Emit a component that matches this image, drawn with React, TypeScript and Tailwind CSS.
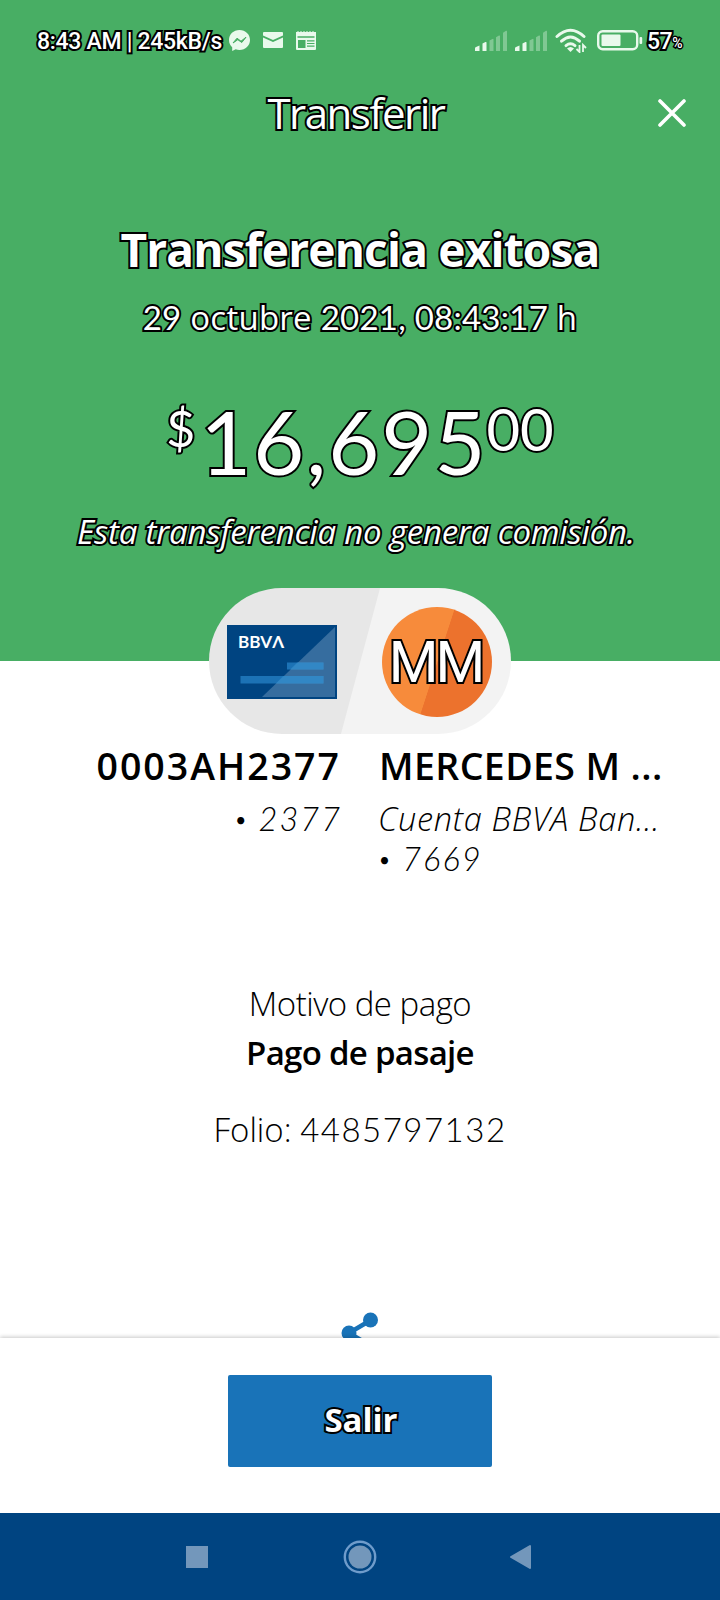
import type { ReactNode } from "react";

const outline = "text-white [paint-order:stroke_fill] [-webkit-text-stroke:4px_#000]";

function Digits({ children, className = "" }: { children: ReactNode; className?: string }) {
  return <span className={`font-['Lato',sans-serif] ${className}`}>{children}</span>;
}

function SignalIcon() {
  return (
    <svg width="32" height="21" viewBox="0 0 32 21" fill="#e9f9ec">
      <path d="M0 21v-2.500q0-1 1-1.400l3.500-1.600V21z" />
      <path d="M7.500 21v-7.500l3-1.500q1-.4 1 .6V21z" />
      <g opacity=".35">
        <path d="M14.500 21V10.500l3-1.600q1-.4 1 .6V21z" />
        <path d="M21 21V7.200l3-1.700q1-.4 1 .6V21z" />
        <path d="M28 21V2.800l3-2q1-.4 1 .6V21z" />
      </g>
    </svg>
  );
}

function StatusBar() {
  return (
    <div className="flex h-20 items-center pl-[37px] text-left font-['Roboto',sans-serif] text-[23px] font-medium">
      <span className={`w-[192px] pt-[4px] tracking-[-0.300px] whitespace-nowrap ${outline}`}>
        8:43 AM | 245kB/s
      </span>
      <svg width="21" height="21" viewBox="0 0 21 21">
        <path
          d="M10.500 0C4.500 0 0 4.300 0 10c0 3 1.200 5.400 3.200 7.200V21l3.500-1.700c1.200.4 2.500.6 3.800.6 6 0 10.500-4.300 10.500-9.900S16.500 0 10.500 0z"
          fill="#e9f9ec"
        />
        <path d="M4 13l4-4.800 4 3 5-4-4.200 5.300-4-2.800z" fill="#48ae64" stroke="#48ae64" strokeWidth="1" />
      </svg>
      <svg className="ml-[13px]" width="20" height="16" viewBox="0 0 20 16" fill="#e9f9ec">
        <path d="M1 0h18q1 0 1 1v2.500l-10 4.500L0 3.500V1q0-1 1-1z" />
        <path d="M0 5.500l10 4.500 10-4.500V15q0 1-1 1H1q-1 0-1-1z" />
      </svg>
      <svg className="ml-[13px]" width="20" height="19" viewBox="0 0 20 19">
        <path
          d="M0 1h1.500V0h1v1h2V0h1v1h2V0h1v1h2V0h1v1h2V0h1v1h2V0h1v1H20v17q0 1-1 1H1q-1 0-1-1z"
          fill="#e9f9ec"
        />
        <path d="M1.500 6h17" stroke="#48ae64" strokeWidth="1.500" />
        <path d="M2 9h7.500v8H2z" fill="#48ae64" />
        <path d="M11 9.800h7.500M11 12.500h7.500M11 15.200h7.500" stroke="#48ae64" strokeWidth="1.200" />
      </svg>
      <div className="ml-auto flex w-[245px] items-center">
        <SignalIcon />
        <span className="w-2" />
        <SignalIcon />
        <svg className="ml-2" width="32" height="25" viewBox="0 0 32 25" fill="none" stroke="#e9f9ec">
          <g strokeWidth="3" strokeLinecap="round">
            <path d="M2 8.500Q15.500-4 29 8.500" />
            <path d="M6.500 13.200Q15.500 4.800 24.500 13.200" />
            <path d="M11 17.600q4.500-3.600 9 0" />
          </g>
          <path d="M12 20.500q3.500-3 7 0L15.500 24z" fill="#e9f9ec" stroke="none" />
          <path d="M24.500 17v7l-3-3M28 24v-7l3 3" strokeWidth="1.800" />
        </svg>
        <svg className="ml-[10px]" width="46" height="21" viewBox="0 0 46 21">
          <rect x="1.200" y="1.200" width="39" height="18" rx="4.500" fill="none" stroke="#e9f9ec" strokeWidth="2.400" />
          <rect x="4.500" y="4.500" width="19" height="11.500" rx="1" fill="#e9f9ec" />
          <rect x="42.500" y="7" width="2.700" height="7" rx="1" fill="#e9f9ec" />
        </svg>
        <span className={`ml-[4px] pt-[4px] tracking-[-0.500px] ${outline}`}>57</span>
        <span className="pt-[7px] text-[14px] text-white [-webkit-text-stroke:3px_#000] [paint-order:stroke_fill]">
          %
        </span>
      </div>
    </div>
  );
}

function Pill() {
  return (
    <div className="relative mx-auto -mt-[73px] flex h-[146px] w-[302px] shrink-0 items-center justify-between rounded-full bg-[linear-gradient(105deg,#e7e7e7_50%,#f3f3f3_50.300%)] pt-px pr-[19px] pl-[18px]">
      <svg width="110" height="74" viewBox="0 0 110 74">
        <rect width="110" height="74" fill="#004481" />
        <path d="M13.500 58.500h83v-7.500h-83zM60 44.500h36.500v-7H60z" fill="#1c72b5" />
        <path d="M35 72L108 2v70z" fill="#8fb0d0" opacity=".38" />
        <path d="M56 51h40.500v7.500H49zM63 44.500h33.500v-7H70z" fill="#2a86c8" opacity=".7" />
        <text
          x="11"
          y="23"
          fill="#fff"
          fontFamily="Lato, sans-serif"
          fontWeight="700"
          fontSize="17"
          textLength="46"
          lengthAdjust="spacingAndGlyphs"
        >
          BBVΛ
        </text>
      </svg>
      <div
        className={`flex size-[110px] items-center justify-center rounded-full bg-[linear-gradient(108deg,#f78b3b_50%,#ec722d_50.500%)] pt-[2px] pr-[3px] font-['Roboto',sans-serif] text-[57px] tracking-[-3px] ${outline}`}
      >
        MM
      </div>
    </div>
  );
}

function AccountNumber({ value }: { value: string }) {
  return (
    <Digits className="tracking-[2px]">
      <span className="align-[4px] text-[19px] leading-none font-normal">•</span> {value}
    </Digits>
  );
}

function Accounts() {
  return (
    <div className="flex gap-[39px] pl-[96px] whitespace-nowrap">
      <div className="w-[244px] text-right">
        <p className="mt-[8px] -mr-px text-[37.500px] leading-[48px] font-semibold tracking-[2px]">0003AH2377</p>
        <p className="mt-[9px] -mr-0.5 text-[32.500px] leading-[39px] font-light italic">
          <AccountNumber value="2377" />
        </p>
      </div>
      <div>
        <p className="mt-[8px] text-[37.500px] leading-[48px] font-semibold tracking-[0.400px]">MERCEDES M ...</p>
        <p className="mt-[9px] -ml-px text-[32.500px] leading-[39px] font-light tracking-[0.700px] italic">
          Cuenta BBVA Ban...
        </p>
        <p className="mt-px text-[32.500px] leading-[39px] font-light italic">
          <AccountNumber value="7669" />
        </p>
      </div>
    </div>
  );
}

function NavBar() {
  return (
    <nav className="flex h-[87px] shrink-0 items-center justify-between bg-[#004481] pr-[189px] pl-[186px]">
      <span className="size-[22px] bg-[#7397bb]" />
      <svg className="ml-0.5" width="34" height="34" viewBox="0 0 34 34" fill="none">
        <circle cx="17" cy="17" r="15.200" stroke="#6f9ccb" strokeWidth="2.400" />
        <circle cx="17" cy="17" r="11.500" fill="#7397bb" />
      </svg>
      <svg width="22" height="26" viewBox="0 0 22 26">
        <path d="M21 2v22L2 13z" fill="#7397bb" stroke="#7397bb" strokeWidth="2" strokeLinejoin="round" />
      </svg>
    </nav>
  );
}

export default function App() {
  return (
    <div className="flex h-[1600px] w-[720px] flex-col overflow-hidden bg-white font-['Open_Sans',sans-serif] text-black">
      <header className="h-[661px] shrink-0 bg-[#48ae64] text-center whitespace-nowrap">
        <StatusBar />
        <div className="grid h-[66px] grid-cols-[100px_1fr_100px] items-center">
          <span />
          <h1 className={`pr-[8px] pb-[2px] text-[42px] tracking-[-1.500px] ${outline}`}>Transferir</h1>
          <button className="flex justify-center pl-[4px]" aria-label="Cerrar">
            <svg width="28" height="28" viewBox="0 0 28 28" stroke="#fff" strokeWidth="3.600" strokeLinecap="round">
              <path d="M2 2l24 24M26 2L2 26" />
            </svg>
          </button>
        </div>
        <h2 className={`mt-[71px] text-[46px] leading-[64px] font-bold tracking-[-0.800px] ${outline}`}>
          Transferencia exitosa
        </h2>
        <p className={`mt-[12px] text-[33px] leading-[48px] tracking-[0.250px] ${outline}`}>
          <Digits>29</Digits> octubre <Digits>2021, 08:43:17</Digits> h
        </p>
        <div className={`mt-[39px] flex h-[120px] justify-center ${outline}`}>
          <Digits className="mt-[17px] text-[50px] leading-[60px]">$</Digits>
          <Digits className="ml-[5px] text-[88px] leading-[120px] tracking-[2px]">16,695</Digits>
          <Digits className="mt-[13px] ml-[-1px] text-[58px] leading-[70px]">00</Digits>
        </div>
        <p className={`mt-[7px] pr-2 text-[33px] leading-[48px] tracking-[-0.200px] italic ${outline}`}>
          Esta transferencia no genera comisión.
        </p>
      </header>
      <main className="flex h-[677px] shrink-0 flex-col">
        <Pill />
        <Accounts />
        <section className="mt-[101px] text-center text-[33px] leading-[49px]">
          <p className="font-light tracking-[-0.500px]">Motivo de pago</p>
          <p className="font-semibold tracking-[-0.700px]">Pago de pasaje</p>
          <p className="mt-[28px] leading-[48px] font-light">
            Folio: <Digits className="tracking-[1.500px]">4485797132</Digits>
          </p>
        </section>
        <div className="mt-auto h-[27px] overflow-hidden">
          <svg className="mx-auto" width="38" height="44" viewBox="0 0 38 44" fill="#1973b8">
            <path d="M8 22L30 9M8 22l22 13" stroke="#1973b8" strokeWidth="4.500" />
            <circle cx="29.500" cy="9" r="7.500" />
            <circle cx="8" cy="22" r="7.500" />
            <circle cx="29.500" cy="35" r="7.500" />
          </svg>
        </div>
      </main>
      <footer className="flex h-[175px] shrink-0 justify-center bg-white pt-[37px] shadow-[0_-1px_4px_rgba(0,0,0,0.220)]">
        <button
          className={`h-[92px] w-[264px] rounded-[2px] bg-[#1973b8] pb-0.5 pl-[2px] text-[33px] font-bold ${outline}`}
        >
          Salir
        </button>
      </footer>
      <NavBar />
    </div>
  );
}
